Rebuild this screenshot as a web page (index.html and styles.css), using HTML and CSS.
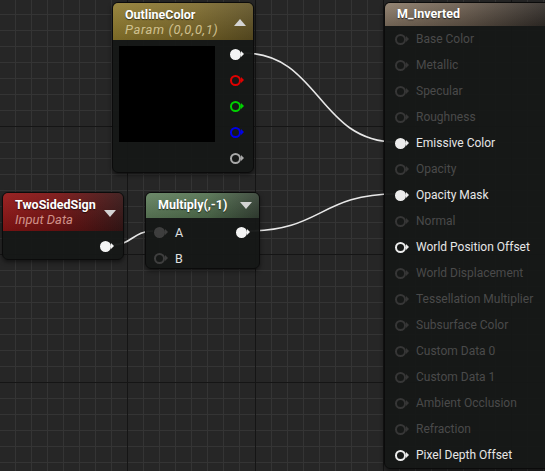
FILE: index.html
```html
<!DOCTYPE html>
<html lang="en">
<head>
  <meta charset="UTF-8">
  <title>M_Inverted</title>
  <link rel="stylesheet" href="styles.css">
</head>
<body>
  <div class="graph">
    <svg class="wires" width="545" height="471" viewBox="0 0 545 471">
      <path d="M243 53 C 320 53, 318 142, 396 142"/>
      <path d="M112 245 C 132 245, 133 231, 153 231"/>
      <path d="M247 231 C 322 231, 320 194, 396 194"/>
    </svg>

    <div class="node node-outline">
      <div class="node-head head-gold">
        <div class="titles">
          <div class="title">OutlineColor</div>
          <div class="subtitle">Param (0,0,0,1)</div>
        </div>
        <span class="arrow up"></span>
      </div>
      <div class="node-body param-body">
        <div class="preview"></div>
        <div class="pins-out">
          <div class="row"><span class="pin filled c-white"></span></div>
          <div class="row"><span class="pin c-red"></span></div>
          <div class="row"><span class="pin c-green"></span></div>
          <div class="row"><span class="pin c-blue"></span></div>
          <div class="row"><span class="pin c-grey"></span></div>
        </div>
      </div>
    </div>

    <div class="node node-sign">
      <div class="node-head head-red">
        <div class="titles">
          <div class="title">TwoSidedSign</div>
          <div class="subtitle">Input Data</div>
        </div>
        <span class="arrow down"></span>
      </div>
      <div class="node-body sign-body">
        <div class="row out"><span class="pin filled c-white"></span></div>
      </div>
    </div>

    <div class="node node-mul">
      <div class="node-head head-green">
        <div class="title">Multiply(,-1)</div>
        <span class="arrow down"></span>
      </div>
      <div class="node-body mul-body">
        <div class="pins-in">
          <div class="row"><span class="pin filled c-dark"></span><span class="label">A</span></div>
          <div class="row"><span class="pin c-dark"></span><span class="label">B</span></div>
        </div>
        <div class="pins-out">
          <div class="row"><span class="pin filled c-white"></span></div>
        </div>
      </div>
    </div>

    <div class="node node-material">
      <div class="node-head head-brown">
        <div class="title">M_Inverted</div>
      </div>
      <div class="node-body material-body">
        <div class="row off"><span class="pin"></span><span class="label">Base Color</span></div>
        <div class="row off"><span class="pin"></span><span class="label">Metallic</span></div>
        <div class="row off"><span class="pin"></span><span class="label">Specular</span></div>
        <div class="row off"><span class="pin"></span><span class="label">Roughness</span></div>
        <div class="row on"><span class="pin filled"></span><span class="label">Emissive Color</span></div>
        <div class="row off"><span class="pin"></span><span class="label">Opacity</span></div>
        <div class="row on"><span class="pin filled"></span><span class="label">Opacity Mask</span></div>
        <div class="row off"><span class="pin"></span><span class="label">Normal</span></div>
        <div class="row on"><span class="pin"></span><span class="label">World Position Offset</span></div>
        <div class="row off"><span class="pin"></span><span class="label">World Displacement</span></div>
        <div class="row off"><span class="pin"></span><span class="label">Tessellation Multiplier</span></div>
        <div class="row off"><span class="pin"></span><span class="label">Subsurface Color</span></div>
        <div class="row off"><span class="pin"></span><span class="label">Custom Data 0</span></div>
        <div class="row off"><span class="pin"></span><span class="label">Custom Data 1</span></div>
        <div class="row off"><span class="pin"></span><span class="label">Ambient Occlusion</span></div>
        <div class="row off"><span class="pin"></span><span class="label">Refraction</span></div>
        <div class="row on"><span class="pin"></span><span class="label">Pixel Depth Offset</span></div>
      </div>
    </div>
  </div>
</body>
</html>
```

FILE: styles.css
```css
html, body {
  margin: 0;
  padding: 0;
  width: 100%;
  height: 100%;
  overflow: hidden;
  font-family: Roboto, "Liberation Sans", sans-serif;
  font-size: 12px;
  background: #262626;
}

.graph {
  position: relative;
  width: 545px;
  height: 471px;
  overflow: hidden;
  background:
    linear-gradient(to right, #151515 1px, transparent 1px) 127px 0 / 128px 128px,
    linear-gradient(to bottom, #151515 1px, transparent 1px) 0 126px / 128px 128px,
    linear-gradient(to right, #343434 1px, transparent 1px) 15px 0 / 16px 16px,
    linear-gradient(to bottom, #343434 1px, transparent 1px) 0 14px / 16px 16px,
    #262626;
}

.wires {
  position: absolute;
  left: 0;
  top: 0;
}

.wires path {
  fill: none;
  stroke: #e8e8e8;
  stroke-width: 1.6;
}

/* nodes */
.node {
  position: absolute;
  display: flex;
  flex-direction: column;
  background: rgba(22, 24, 23, 0.96);
  border: 1px solid #0b0b0b;
  border-radius: 6px;
  box-shadow: 0 2px 4px rgba(0, 0, 0, 0.5);
  overflow: hidden;
  box-sizing: border-box;
}

.node-outline { left: 112px; top: 2px; width: 142px; height: 171px; }
.node-sign { left: 2px; top: 192px; width: 122px; height: 68px; }
.node-mul { left: 145px; top: 192px; width: 115px; height: 77px; }
.node-material { left: 384px; top: 2px; width: 175px; height: 467px; }

.node-head {
  display: flex;
  align-items: flex-start;
  justify-content: space-between;
  padding: 4px 8px 0 12px;
  box-sizing: border-box;
  flex: none;
}

.head-gold {
  height: 37px;
  background:
    linear-gradient(to bottom, rgba(255, 255, 255, 0.1), rgba(0, 0, 0, 0.15)),
    linear-gradient(to right, #8f7a2c, #7a6728 60%, #5e5022);
}

.head-red {
  height: 38px;
  background:
    linear-gradient(to bottom, rgba(255, 255, 255, 0.06), rgba(0, 0, 0, 0.2)),
    linear-gradient(to right, #951717, #7a1414 45%, #3a1818);
}

.head-green {
  height: 25px;
  background:
    linear-gradient(to bottom, rgba(255, 255, 255, 0.08), rgba(0, 0, 0, 0.15)),
    linear-gradient(to right, #61805d, #52704f 55%, #354235);
}

.head-brown {
  height: 23px;
  padding-top: 3px;
  background:
    linear-gradient(to bottom, rgba(255, 255, 255, 0.08), rgba(0, 0, 0, 0.2)),
    linear-gradient(to right, #8d7c69, #6a5c4e 45%, #2c2825);
}

.title {
  color: #fff;
  font-size: 12.5px;
  font-weight: bold;
  line-height: 15px;
  text-shadow: 0 1px 1px rgba(0, 0, 0, 0.6);
}

.subtitle {
  font-size: 13px;
  font-style: italic;
  line-height: 16px;
}

.head-gold .subtitle { color: #cfc08f; letter-spacing: 0.6px; }
.head-red .subtitle { color: #d0928a; }

.arrow {
  width: 0;
  height: 0;
  margin-top: 7px;
  border-left: 6px solid transparent;
  border-right: 6px solid transparent;
}

.arrow.up { border-bottom: 7px solid #d4d4d4; margin-top: 12px; margin-right: -1px; }
.arrow.down { border-top: 7px solid #d4d4d4; }
.head-red .arrow { margin-top: 13px; margin-right: -1px; }
.head-green .arrow { margin-top: 5px; margin-right: -1px; }

/* pins */
.row {
  display: flex;
  align-items: center;
  height: 26px;
}

.pin {
  --c: #3a3a3a;
  position: relative;
  width: 7px;
  height: 7px;
  border: 2px solid var(--c);
  border-radius: 50%;
  flex: none;
}

.pin::after {
  content: "";
  position: absolute;
  left: 100%;
  top: 50%;
  margin-top: -3px;
  margin-left: 2px;
  border-left: 3px solid var(--c);
  border-top: 3px solid transparent;
  border-bottom: 3px solid transparent;
}

.pin.filled { background: var(--c); }

.c-white { --c: #f4f4f4; }
.c-red { --c: #e00000; }
.c-green { --c: #00d000; }
.c-blue { --c: #0000e8; }
.c-grey { --c: #a8a8a8; }
.c-dark { --c: #3e3e3e; }

.param-body {
  display: flex;
  padding: 6px 0 0 6px;
}

.preview {
  width: 96px;
  height: 96px;
  background: #000;
}

.param-body .pins-out {
  margin: -5px 0 0 15px;
}

.sign-body {
  display: flex;
  justify-content: flex-end;
  padding: 2px 12px 0 0;
}

.mul-body {
  display: flex;
  justify-content: space-between;
  padding: 1px 12px 0 8px;
}

.mul-body .label {
  color: #e0e0e0;
  font-size: 12.5px;
  margin-left: 10px;
}

.material-body {
  padding: 0 0 0 10px;
}

.material-body .label {
  margin-left: 10px;
  white-space: nowrap;
}

.row.off .label { color: #4a4a4a; }
.row.off .pin { --c: #363636; }
.row.on .label { color: #e6e6e6; }
.row.on .pin { --c: #ececec; }
```
